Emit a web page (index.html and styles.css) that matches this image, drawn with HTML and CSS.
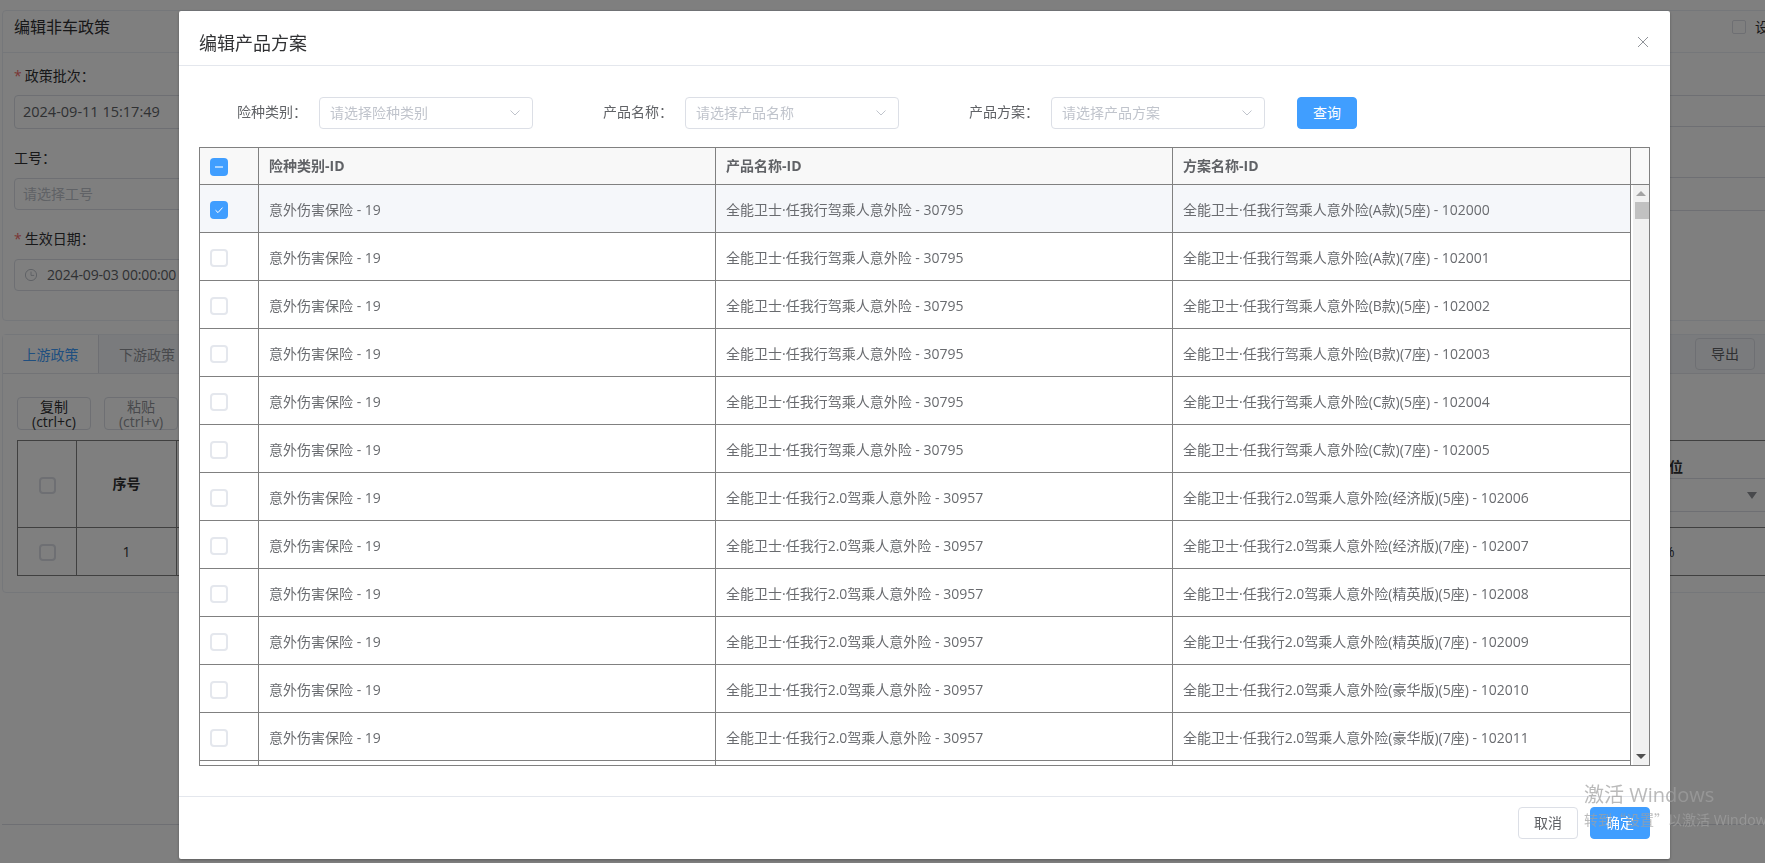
FILE: index.html
```html
<!DOCTYPE html>
<html lang="zh-CN">
<head>
  <meta charset="UTF-8">
  <title>编辑非车政策</title>
  <link rel="stylesheet" href="styles.css">
</head>
<body>
  <div class="page">
    <div class="card">
      <div class="card-title">
        <span class="title-text">编辑非车政策</span>
        <span class="title-check"><i class="small-check"></i>设置</span>
      </div>
      <div class="form-area">
        <div class="form-left">
          <div class="field-label first"><em>*</em>政策批次：</div>
          <div class="field-input tall">2024-09-11 15:17:49</div>
          <div class="field-label plain">工号：</div>
          <div class="field-input placeholder">请选择工号</div>
          <div class="field-label"><em>*</em>生效日期：</div>
          <div class="field-input date">
            <svg class="clock" viewBox="0 0 14 14"><circle cx="7" cy="7" r="5.6"/><path d="M7 3.6V7.4H10.2"/></svg>
            2024-09-03 00:00:00
          </div>
        </div>
        <div class="form-right">
          <div class="right-input one"></div>
          <div class="right-input two"></div>
        </div>
      </div>
    </div>

    <div class="card tabs-card">
      <div class="tab-bar">
        <span class="tab active">上游政策</span>
        <span class="tab">下游政策</span>
        <button class="btn export">导出</button>
      </div>
      <div class="tab-body">
        <div class="copy-row">
          <button class="btn-copy">复制<br>(ctrl+c)</button>
          <button class="btn-copy muted">粘贴<br>(ctrl+v)</button>
        </div>
        <table class="policy-table">
          <tr class="policy-head">
            <th class="c-check"><i class="box dark"></i></th>
            <th class="c-no">序号</th>
            <th></th>
            <th class="c-last">
              <div class="unit-title">单位</div>
              <div class="unit-select"><i class="tri"></i></div>
            </th>
          </tr>
          <tr class="policy-row">
            <td class="c-check"><i class="box dark"></i></td>
            <td class="c-no">1</td>
            <td></td>
            <td class="c-last unit-val">%</td>
          </tr>
        </table>
      </div>
    </div>
    <div class="page-foot"></div>
  </div>

  <div class="mask">
    <div class="modal">
      <div class="modal-head">
        <span class="modal-title">编辑产品方案</span>
        <svg class="close" viewBox="0 0 12 12"><path d="M1 1L11 11M11 1L1 11"/></svg>
      </div>
      <div class="modal-body">
        <div class="filters">
          <div class="filter">
            <label>险种类别：</label>
            <div class="select">请选择险种类别<svg class="chev" viewBox="0 0 10 6"><path d="M0.5 0.5L5 5L9.5 0.5"/></svg></div>
          </div>
          <div class="filter">
            <label>产品名称：</label>
            <div class="select">请选择产品名称<svg class="chev" viewBox="0 0 10 6"><path d="M0.5 0.5L5 5L9.5 0.5"/></svg></div>
          </div>
          <div class="filter">
            <label>产品方案：</label>
            <div class="select">请选择产品方案<svg class="chev" viewBox="0 0 10 6"><path d="M0.5 0.5L5 5L9.5 0.5"/></svg></div>
          </div>
          <button class="btn primary">查询</button>
        </div>

        <div class="grid">
          <table class="grid-head">
            <tr>
              <th class="col-check"><i class="box on"><svg viewBox="0 0 18 18"><path class="minus" d="M5 9H13"/></svg></i></th>
              <th class="col-wide">险种类别-ID</th>
              <th class="col-wide">产品名称-ID</th>
              <th class="col-last">方案名称-ID</th>
              <th class="col-gutter"></th>
            </tr>
          </table>
          <div class="grid-scroll">
            <div class="grid-rows">
              <table class="grid-body">
                <tr class="current">
                  <td class="col-check"><i class="box on"><svg viewBox="0 0 18 18"><path d="M5.5 9.2L8 11.6L12.5 6.6"/></svg></i></td>
                  <td class="col-wide">意外伤害保险 - 19</td>
                  <td class="col-wide">全能卫士·任我行驾乘人意外险 - 30795</td>
                  <td class="col-last">全能卫士·任我行驾乘人意外险(A款)(5座) - 102000</td>
                </tr>
                <tr>
                  <td class="col-check"><i class="box"></i></td>
                  <td>意外伤害保险 - 19</td>
                  <td>全能卫士·任我行驾乘人意外险 - 30795</td>
                  <td>全能卫士·任我行驾乘人意外险(A款)(7座) - 102001</td>
                </tr>
                <tr>
                  <td class="col-check"><i class="box"></i></td>
                  <td>意外伤害保险 - 19</td>
                  <td>全能卫士·任我行驾乘人意外险 - 30795</td>
                  <td>全能卫士·任我行驾乘人意外险(B款)(5座) - 102002</td>
                </tr>
                <tr>
                  <td class="col-check"><i class="box"></i></td>
                  <td>意外伤害保险 - 19</td>
                  <td>全能卫士·任我行驾乘人意外险 - 30795</td>
                  <td>全能卫士·任我行驾乘人意外险(B款)(7座) - 102003</td>
                </tr>
                <tr>
                  <td class="col-check"><i class="box"></i></td>
                  <td>意外伤害保险 - 19</td>
                  <td>全能卫士·任我行驾乘人意外险 - 30795</td>
                  <td>全能卫士·任我行驾乘人意外险(C款)(5座) - 102004</td>
                </tr>
                <tr>
                  <td class="col-check"><i class="box"></i></td>
                  <td>意外伤害保险 - 19</td>
                  <td>全能卫士·任我行驾乘人意外险 - 30795</td>
                  <td>全能卫士·任我行驾乘人意外险(C款)(7座) - 102005</td>
                </tr>
                <tr>
                  <td class="col-check"><i class="box"></i></td>
                  <td>意外伤害保险 - 19</td>
                  <td>全能卫士·任我行2.0驾乘人意外险 - 30957</td>
                  <td>全能卫士·任我行2.0驾乘人意外险(经济版)(5座) - 102006</td>
                </tr>
                <tr>
                  <td class="col-check"><i class="box"></i></td>
                  <td>意外伤害保险 - 19</td>
                  <td>全能卫士·任我行2.0驾乘人意外险 - 30957</td>
                  <td>全能卫士·任我行2.0驾乘人意外险(经济版)(7座) - 102007</td>
                </tr>
                <tr>
                  <td class="col-check"><i class="box"></i></td>
                  <td>意外伤害保险 - 19</td>
                  <td>全能卫士·任我行2.0驾乘人意外险 - 30957</td>
                  <td>全能卫士·任我行2.0驾乘人意外险(精英版)(5座) - 102008</td>
                </tr>
                <tr>
                  <td class="col-check"><i class="box"></i></td>
                  <td>意外伤害保险 - 19</td>
                  <td>全能卫士·任我行2.0驾乘人意外险 - 30957</td>
                  <td>全能卫士·任我行2.0驾乘人意外险(精英版)(7座) - 102009</td>
                </tr>
                <tr>
                  <td class="col-check"><i class="box"></i></td>
                  <td>意外伤害保险 - 19</td>
                  <td>全能卫士·任我行2.0驾乘人意外险 - 30957</td>
                  <td>全能卫士·任我行2.0驾乘人意外险(豪华版)(5座) - 102010</td>
                </tr>
                <tr>
                  <td class="col-check"><i class="box"></i></td>
                  <td>意外伤害保险 - 19</td>
                  <td>全能卫士·任我行2.0驾乘人意外险 - 30957</td>
                  <td>全能卫士·任我行2.0驾乘人意外险(豪华版)(7座) - 102011</td>
                </tr>
                <tr>
                  <td class="col-check"></td>
                  <td></td>
                  <td></td>
                  <td></td>
                </tr>
              </table>
            </div>
            <div class="scrollbar">
              <i class="arrow up"></i>
              <div class="thumb"></div>
              <i class="arrow down"></i>
            </div>
          </div>
        </div>
      </div>
      <div class="modal-foot">
        <button class="btn">取消</button>
        <button class="btn primary">确定</button>
      </div>
    </div>
  </div>

  <div class="watermark">
    <div class="wm-big">激活 Windows</div>
    <div class="wm-small">转到<span class="wm-quote">“</span>设置<span class="wm-quote">”</span>以激活 Windows。</div>
  </div>
</body>
</html>
```
FILE: styles.css
```css
* {
  box-sizing: border-box;
}
html, body {
  margin: 0;
  height: 100%;
  overflow: hidden;
}
body {
  font-family: "Open Sans", "Noto Sans CJK SC", sans-serif;
  font-size: 14px;
  line-height: 20px;
  color: #606266;
  background: #fff;
}
i, em {
  font-style: normal;
}

/* page under the dialog */
.page {
  width: 1780px;
  height: 863px;
  padding: 10px 2px 0;
}
.card {
  height: 311px;
  border: 1px solid #ebeef5;
  border-radius: 4px;
}
.card-title {
  padding: 5px 11px 0;
  display: flex;
  align-items: flex-start;
  justify-content: space-between;
  border-bottom: 1px solid #ebeef5;
  box-sizing: content-box;
  height: 36px;
}
.title-text {
  font-size: 16px;
  line-height: 22px;
  color: #303133;
}
.title-check {
  display: flex;
  align-items: center;
  gap: 9px;
  width: 46px;
  height: 20px;
  margin: 1px -12px 0 0;
  color: #303133;
  white-space: nowrap;
}
.small-check {
  flex: none;
  width: 14px;
  height: 14px;
  border: 1px solid #dcdfe6;
  border-radius: 2px;
}
.form-area {
  display: flex;
  justify-content: space-between;
}
.form-left {
  width: 300px;
  padding: 13px 0 0 11px;
}
.field-label {
  margin-top: 19px;
  color: #303133;
}
.field-label.first {
  margin-top: 0;
}
.field-label em {
  color: #f56c6c;
  margin-right: 3px;
}
.field-input {
  margin-top: 10px;
  height: 32px;
  line-height: 30px;
  padding: 0 8px;
  border: 1px solid #dcdfe6;
  border-radius: 4px;
  color: #606266;
}
.field-input.tall {
  margin-top: 9px;
  height: 34px;
  line-height: 32px;
  font-size: 14.5px;
}
.field-input.placeholder {
  color: #c0c4cc;
}
.field-input.date {
  display: flex;
  align-items: center;
  gap: 9px;
  white-space: nowrap;
  letter-spacing: -.15px;
}
.clock {
  width: 14px;
  height: 14px;
  margin-left: 1px;
  fill: none;
  stroke: #c0c4cc;
  stroke-width: 1;
}
.form-right {
  width: 300px;
}
.right-input {
  border-top: 1px solid #dcdfe6;
  border-bottom: 1px solid #dcdfe6;
}
.right-input.one {
  margin-top: 42px;
  height: 32px;
}
.right-input.two {
  margin-top: 50px;
  height: 34px;
}

.tabs-card {
  margin-top: 13px;
  height: 259px;
}
.tab-bar {
  height: 39px;
  display: flex;
  align-items: center;
  padding-right: 22px;
  background: #f5f7fa;
  border-bottom: 1px solid #e4e7ed;
}
.tab {
  width: 96px;
  height: 38px;
  line-height: 40px;
  text-align: center;
  color: #909399;
  border-right: 1px solid #dcdfe6;
}
.tab.active {
  background: #fff;
  color: #409eff;
}
.tab + .tab {
  width: 104px;
  border-right: 0;
  padding-left: 20px;
  text-align: left;
}
.export {
  margin-left: auto;
  color: #606266;
}
.tab-body {
  padding: 23px 14px 0;
}
.copy-row {
  display: flex;
  gap: 13px;
  height: 33px;
}
.btn-copy {
  width: 74px;
  height: 33px;
  padding: 0;
  font: inherit;
  line-height: 15px;
  color: #303133;
  background: transparent;
  border: 1px solid #dcdfe6;
  border-radius: 4px;
}
.btn-copy.muted {
  color: #909399;
}
.policy-table {
  margin-top: 10px;
  width: 1800px;
  table-layout: fixed;
  border-collapse: collapse;
  color: #303133;
}
.policy-table th, .policy-table td {
  border: 1px solid #808080;
  padding: 0;
}
.policy-table .box {
  width: 17px;
  height: 17px;
  margin-top: 2px;
}
.policy-head {
  height: 87px;
}
.policy-row {
  height: 48px;
}
.c-check {
  width: 59px;
  padding-left: 21px !important;
  text-align: left;
}
.c-no {
  width: 100px;
  text-align: center;
  font-weight: 400;
}
th.c-no {
  font-weight: 700;
}
.policy-table tr > :last-child {
  width: 200px;
  vertical-align: top;
}
.unit-title {
  height: 37px;
  line-height: 52px;
  padding-left: 38px;
  font-weight: 700;
  text-align: left;
}
.unit-select {
  height: 34px;
  border-top: 1px solid #dcdfe6;
  border-bottom: 1px solid #dcdfe6;
  position: relative;
}
.tri {
  position: absolute;
  left: 130px;
  top: 13px;
  border: 5px solid transparent;
  border-width: 7px 5px 0;
  border-top-color: #909399;
}
.policy-table tr > .unit-val {
  vertical-align: middle;
  padding-left: 46px;
}
.page-foot {
  margin-top: 231px;
  border-top: 1px solid #dcdfe6;
}

/* dialog */
.mask {
  position: fixed;
  top: 0;
  left: 0;
  right: 0;
  bottom: 0;
  background: rgba(0, 0, 0, .5);
}
.modal {
  width: 1491px;
  height: 848px;
  margin: 11px 0 0 179px;
  background: #fff;
  border-radius: 2px;
  box-shadow: 0 1px 3px rgba(0, 0, 0, .3);
}
.modal-head {
  height: 55px;
  padding: 20px 21px 10px 20px;
  display: flex;
  justify-content: space-between;
  align-items: center;
  border-bottom: 1px solid #e4e7ed;
}
.modal-title {
  font-size: 18px;
  line-height: 24px;
  color: #303133;
}
.close {
  width: 12px;
  height: 12px;
  margin-top: -2px;
  fill: none;
  stroke: #909399;
  stroke-width: 1;
}
.modal-body {
  height: 731px;
  padding: 31px 20px 0;
  border-bottom: 1px solid #e4e7ed;
}
.filters {
  display: flex;
  height: 32px;
  margin-bottom: 18px;
  padding-left: 1px;
}
.filter {
  display: flex;
  margin-right: 33px;
}
.filter:nth-child(3) {
  margin-right: 32px;
}
.filter label {
  width: 119px;
  padding-right: 12px;
  text-align: right;
  line-height: 30px;
}
.select {
  width: 214px;
  height: 32px;
  line-height: 30px;
  padding: 0 10px;
  border: 1px solid #dcdfe6;
  border-radius: 4px;
  color: #c0c4cc;
  display: flex;
  align-items: center;
  justify-content: space-between;
}
.chev {
  width: 10px;
  height: 6px;
  margin-right: 2px;
  fill: none;
  stroke: #c0c4cc;
  stroke-width: 1;
}
.btn {
  width: 60px;
  height: 32px;
  padding: 0;
  font: inherit;
  color: #606266;
  background: transparent;
  border: 1px solid #dcdfe6;
  border-radius: 4px;
}
.btn.primary {
  color: #fff;
  background: #409eff;
  border-color: #409eff;
}

/* product plan grid */
.grid {
  width: 1451px;
  height: 619px;
  border: 1px solid #808080;
}
.grid table {
  border-collapse: separate;
  border-spacing: 0;
  table-layout: fixed;
}
.grid-head {
  width: 1449px;
  background: #f8f8f8;
}
.grid th {
  height: 37px;
  padding: 0 10px;
  text-align: left;
  font-weight: 700;
  border-bottom: 1px solid #808080;
  border-right: 1px solid #808080;
}
.grid th .box {
  margin-top: 1px;
}
.grid th.col-gutter {
  width: 18px;
  padding: 0;
  border-right: 0;
}
.col-check {
  width: 59px;
}
.col-wide {
  width: 457px;
}
.col-last {
  width: 458px;
}
.grid-scroll {
  display: flex;
  height: 580px;
}
.grid-rows {
  width: 1431px;
  height: 580px;
  overflow: hidden;
}
.grid-body {
  width: 1431px;
}
.grid td {
  height: 48px;
  padding: 2px 10px 0;
  border-bottom: 1px solid #808080;
  border-right: 1px solid #808080;
  color: #696b6f;
}
.current td {
  background: #f5f7fa;
}
.box {
  display: block;
  width: 18px;
  height: 18px;
  border: 2px solid #e4e7ed;
  border-radius: 4px;
}
.box.on {
  background: #409eff;
  border: 0;
}
.box.dark {
  border-color: #dcdfe6;
}
.box svg {
  display: block;
  width: 18px;
  height: 18px;
  fill: none;
  stroke: #fff;
  stroke-width: 1;
}
.box svg .minus {
  stroke-width: 2;
  stroke: #a8d3ff;
}
.scrollbar {
  width: 16px;
  margin-left: 2px;
  height: 580px;
  background: #f1f1f1;
  display: flex;
  flex-direction: column;
  align-items: center;
}
.arrow {
  flex: none;
  border: 5px solid transparent;
}
.arrow.up {
  margin-top: 6px;
  border-width: 0 5px 5px;
  border-bottom-color: #a3a3a3;
}
.arrow.down {
  margin-top: auto;
  margin-bottom: 6px;
  border-width: 5px 5px 0;
  border-top-color: #505050;
}
.thumb {
  width: 14px;
  height: 17px;
  margin: 6px 0 0 1px;
  background: #c1c1c1;
}
.modal-foot {
  display: flex;
  justify-content: flex-end;
  gap: 12px;
  padding: 10px 20px 0;
}

/* activation notice sits on top of everything */
.watermark {
  position: fixed;
  left: 1584px;
  top: 781px;
  width: 181px;
  overflow: hidden;
  white-space: nowrap;
  color: rgba(160, 160, 160, .72);
  pointer-events: none;
}
.wm-big {
  font-size: 20px;
  line-height: 28px;
}
.wm-small {
  line-height: 20px;
}
.wm-quote {
  font-family: "Noto Sans CJK SC", sans-serif;
  display: inline-block;
  width: 14px;
}
```
